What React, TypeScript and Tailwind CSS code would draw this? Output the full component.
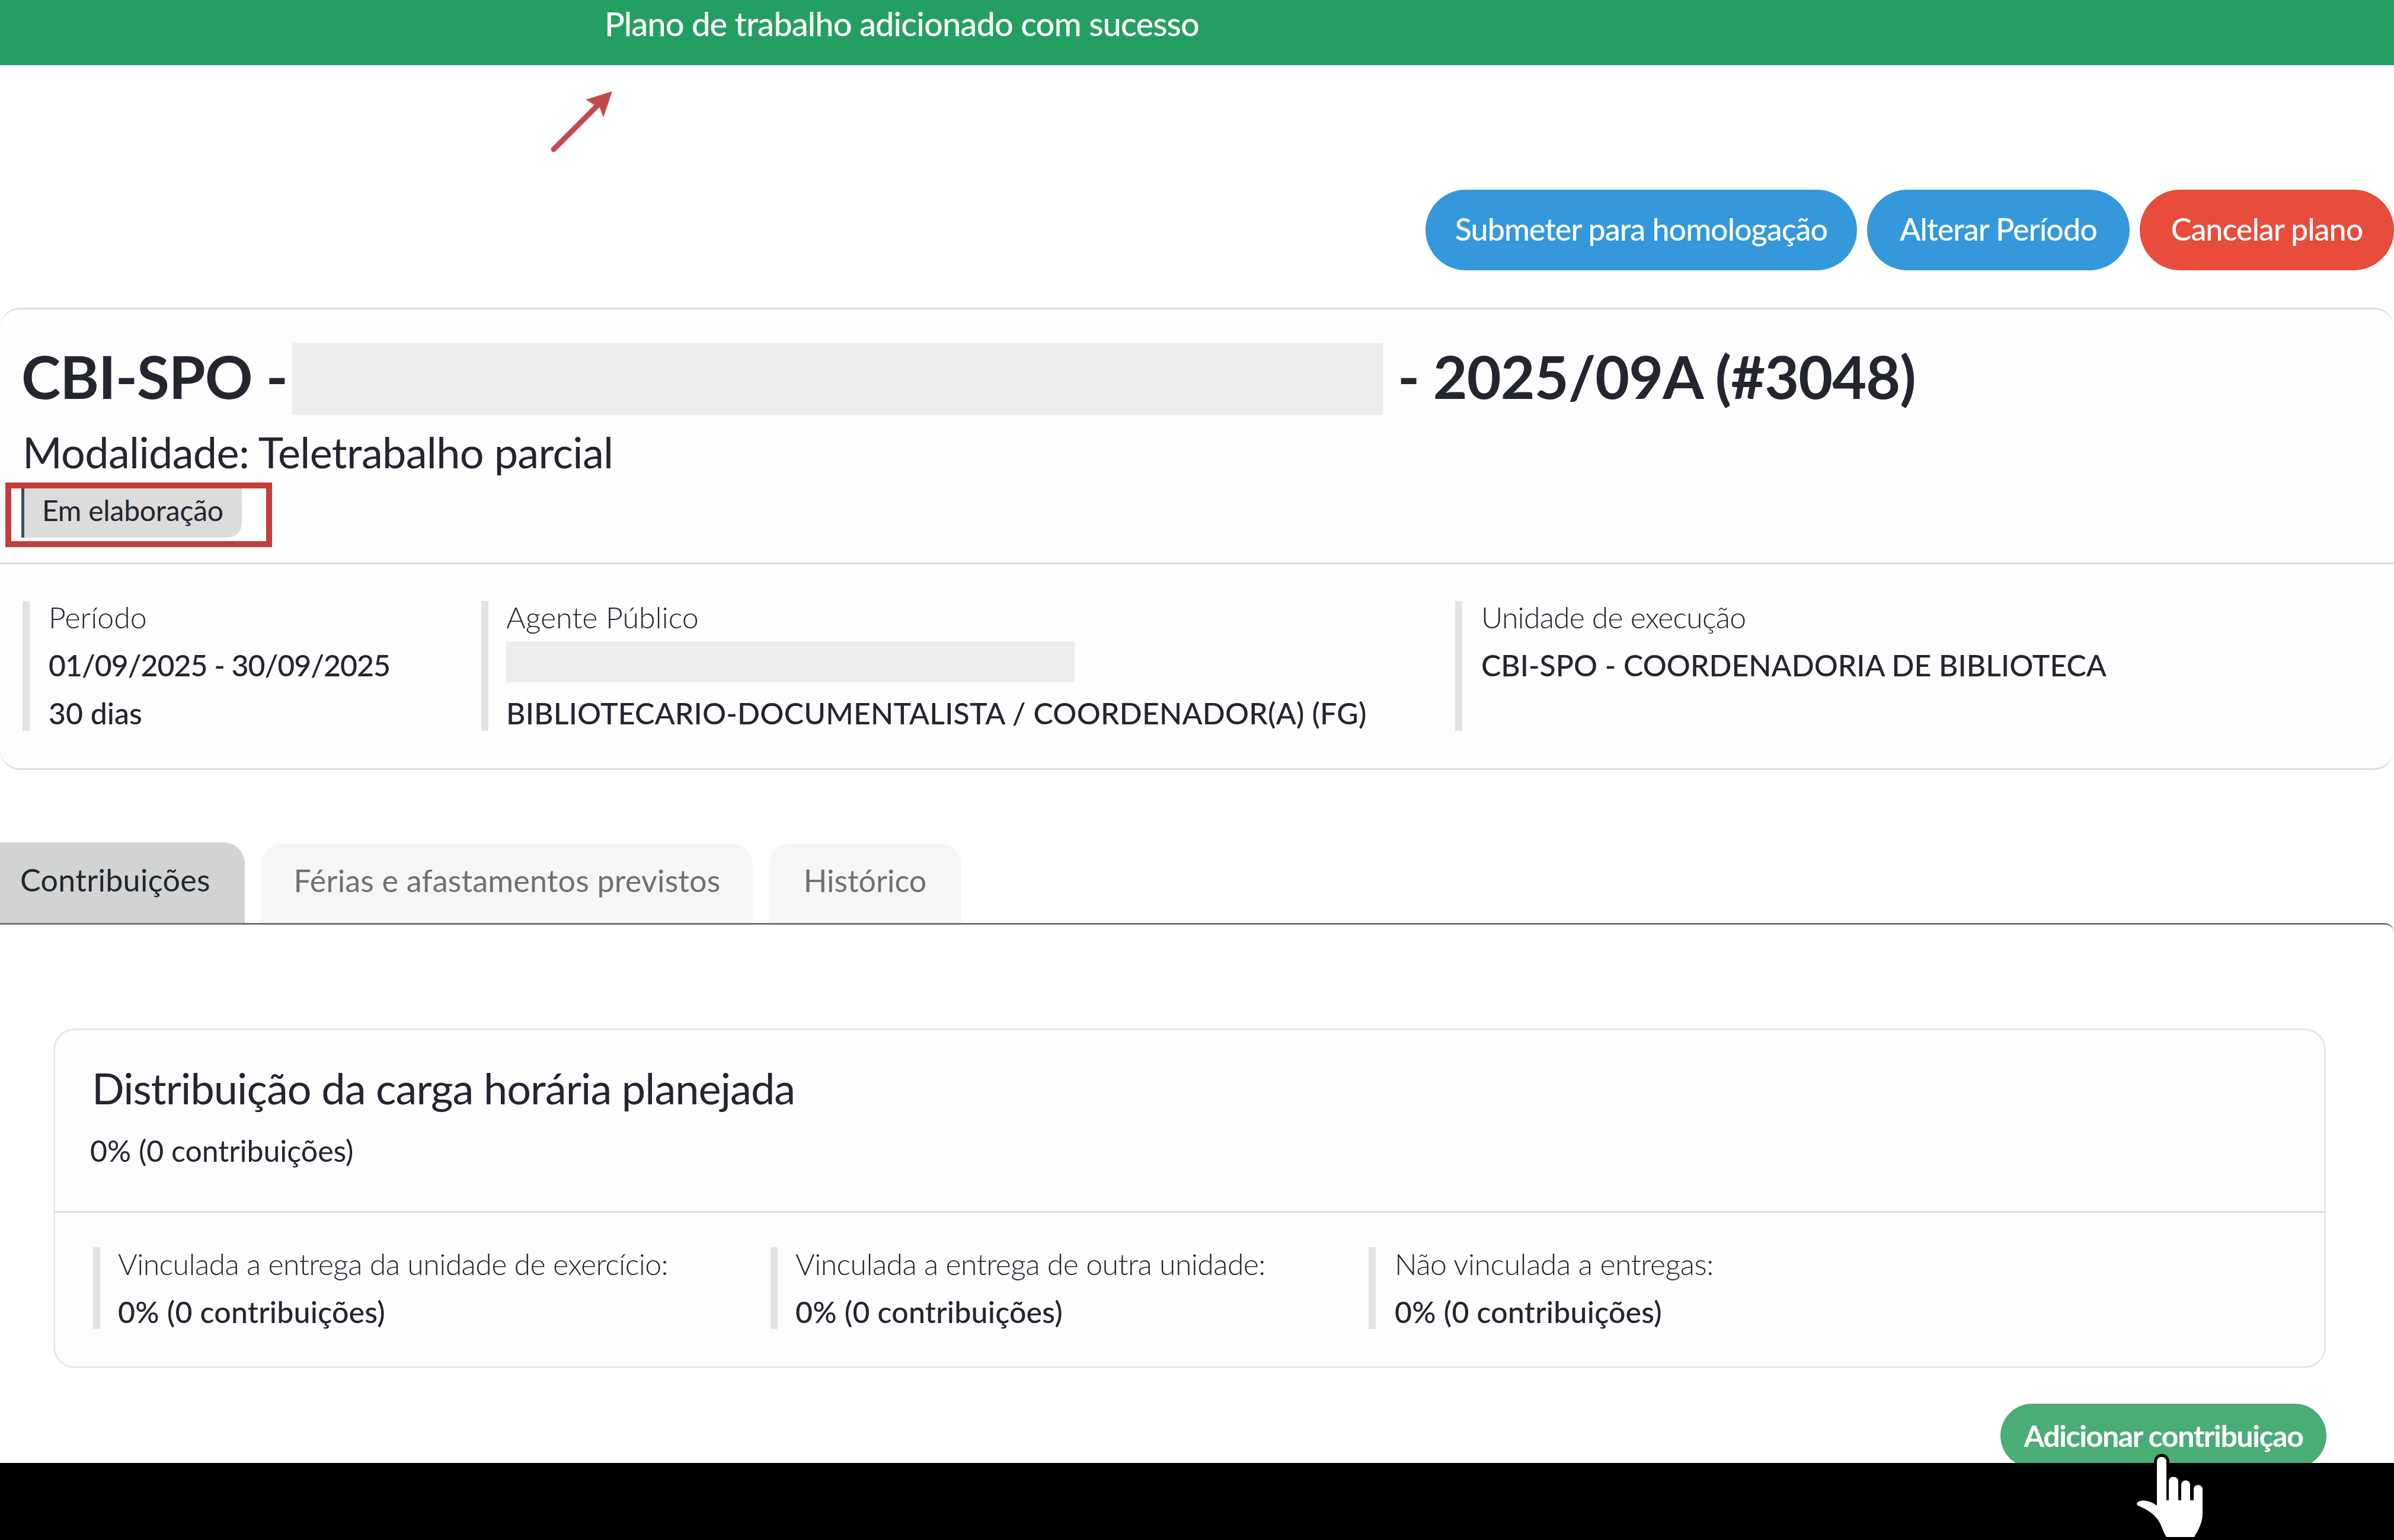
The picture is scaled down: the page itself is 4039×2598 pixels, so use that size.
import React from "react";

const Redacted = ({ className }: { className: string }) => (
  <div className={`bg-[#ecedee] ${className}`} />
);

const InfoBlock = ({
  className,
  children,
}: {
  className: string;
  children: React.ReactNode;
}) => (
  <div className={`border-l-[12px] border-[#e2e3e3] ${className}`}>
    {children}
  </div>
);

const HandCursor = () => (
  <svg
    className="absolute left-[3600px] top-[2450px]"
    width="130"
    height="148"
    viewBox="0 0 130 148"
  >
    <path
      d="M39 16 C39 5 55 5 55 16 L55 81 L59 81 L59 49 C59 39 75 39 75 49 L75 81 L80 81 L80 55 C80 45 95 45 95 55 L95 81 L101 81 L101 62 C101 53 116 53 116 62 L116 103 C116 120 108 132 102 143 L55 143 C49 134 47 122 40 113 C34 104 20 95 7 90 C3 87 6 83 12 82 C22 80 32 85 39 90 Z"
      fill="#fff"
      stroke="#000"
      strokeWidth="10"
      strokeLinejoin="round"
      paintOrder="stroke"
    />
  </svg>
);

export default function App() {
  return (
    <div className="relative h-[2598px] w-full overflow-hidden bg-white font-['Lato',sans-serif] text-[50px] leading-[81px] text-[#23252f]">
      {/* Banner */}
      <div className="flex h-[110px] items-start bg-[#249f62] pl-[1020px] text-[56px] font-medium leading-[80px] tracking-[-0.9px] text-white">
        Plano de trabalho adicionado com sucesso
      </div>

      <svg
        className="absolute left-[925px] top-[145px]"
        width="115"
        height="118"
        viewBox="0 0 115 118"
      >
        <path d="M9 107 L82 34" stroke="#c4494e" strokeWidth="9" strokeLinecap="round" />
        <path d="M108 9 L63 23 L78 32 L87 37 L93 53 Z" fill="#c4494e" />
      </svg>

      {/* Actions */}
      <div className="mt-[210px] flex h-[136px] justify-end gap-[17px] text-[52px] font-medium tracking-[-1px] text-white">
        <button className="flex h-full w-[728px] items-center justify-center rounded-[68px] bg-[#3498db] pb-[4px]">
          Submeter para homologação
        </button>
        <button className="flex h-full w-[443px] items-center justify-center rounded-[68px] bg-[#3498db] pb-[4px]">
          Alterar Período
        </button>
        <button className="flex h-full w-[429px] items-center justify-center rounded-[68px] bg-[#e74c3c] pb-[4px]">
          Cancelar plano
        </button>
      </div>

      {/* Plan card */}
      <div className="mt-[63px] h-[780px] rounded-[34px] border-y-[3px] border-[#dcdddf] bg-[#fdfdfd]">
        <div className="flex h-[430px] flex-col border-b-[3px] border-[#d8d9da]">
          <div className="flex items-center pl-[36px] pt-[52px] text-[100px] font-bold leading-[121px] tracking-[-1px]">
            <span>CBI-SPO -</span>
            <Redacted className="ml-[8px] h-[121px] w-[1840px] translate-y-[5px]" />
            <span className="ml-[25px]">- 2025/09A (#3048)</span>
          </div>
          <div className="pl-[38px] pt-[22px] text-[72px] leading-[90px] tracking-[-0.65px]">
            Modalidade: Teletrabalho parcial
          </div>
          <div className="ml-[9px] mt-[7px] h-[109px] w-[450px] border-[10px] border-[#c43c3c] bg-white pl-[17px]">
            <div className="h-[83px] w-[372px] rounded-br-[24px] border-l-[5px] border-[#37505f] bg-[#dcdcdc] pl-[30px] text-[48px] leading-[74px] tracking-[-0.2px]">
              Em elaboração
            </div>
          </div>
        </div>
        <div className="flex pl-[38px] pt-[62px]">
          <InfoBlock className="h-[219px] w-[774px] pl-[32px]">
            <div className="-mt-[13px] font-light">Período</div>
            <div className="font-medium tracking-[-1px]">
              01/09/2025 - 30/09/2025
            </div>
            <div className="font-medium">30 dias</div>
          </InfoBlock>
          <InfoBlock className="h-[219px] w-[1643px] pl-[30px]">
            <div className="-mt-[13px] font-light">Agente Público</div>
            <Redacted className="h-[69px] w-[959px]" />
            <div className="mt-[12px] font-medium tracking-[0.2px]">
              BIBLIOTECARIO-DOCUMENTALISTA / COORDENADOR(A) (FG)
            </div>
          </InfoBlock>
          <InfoBlock className="h-[219px] pl-[32px]">
            <div className="-mt-[13px] font-light tracking-[-0.8px]">
              Unidade de execução
            </div>
            <div className="font-medium">
              CBI-SPO - COORDENADORIA DE BIBLIOTECA
            </div>
          </InfoBlock>
        </div>
      </div>

      {/* Tabs */}
      <div className="mt-[122px] flex h-[136px] items-end text-[52px] text-[#6e7076]">
        <div className="flex h-[136px] w-[413px] items-center rounded-tr-[36px] bg-[#d2d3d3] pb-[10px] pl-[34px] tracking-[0.3px] text-[#23252f]">
          Contribuições
        </div>
        <div className="ml-[28px] flex h-[134px] w-[829px] items-center justify-center rounded-t-[36px] bg-[#f5f6f6] pb-[10px] tracking-[0.2px]">
          Férias e afastamentos previstos
        </div>
        <div className="ml-[27px] flex h-[134px] w-[325px] items-center justify-center rounded-t-[36px] bg-[#f5f6f6] pb-[10px]">
          Histórico
        </div>
      </div>

      {/* Tab content */}
      <div className="h-[908px] rounded-tr-[16px] border-t-[3px] border-[#74747e] pl-[90px] pt-[175px]">
        <div className="h-[573px] w-[3834px] rounded-[36px] border-[3px] border-[#e6e7e9] bg-[#fdfdfd]">
          <div className="h-[308px] border-b-[3px] border-[#dcdce2] pl-[62px] pt-[52px]">
            <div className="text-[72px] leading-[90px] tracking-[-0.9px]">
              Distribuição da carga horária planejada
            </div>
            <div className="-ml-[3px] mt-[21px]">0% (0 contribuições)</div>
          </div>
          <div className="flex pl-[64px] pt-[58px]">
            <InfoBlock className="h-[138px] w-[1143px] pl-[30px]">
              <div className="-mt-[12px] font-light tracking-[-0.6px]">
                Vinculada a entrega da unidade de exercício:
              </div>
              <div className="font-medium tracking-[0.25px]">0% (0 contribuições)</div>
            </InfoBlock>
            <InfoBlock className="h-[138px] w-[1009px] pl-[30px]">
              <div className="-mt-[12px] font-light tracking-[-0.6px]">
                Vinculada a entrega de outra unidade:
              </div>
              <div className="font-medium tracking-[0.25px]">0% (0 contribuições)</div>
            </InfoBlock>
            <InfoBlock className="h-[138px] pl-[32px]">
              <div className="-mt-[12px] font-light tracking-[-0.5px]">
                Não vinculada a entregas:
              </div>
              <div className="font-medium tracking-[0.25px]">0% (0 contribuições)</div>
            </InfoBlock>
          </div>
        </div>
        <div className="mt-[60px] flex justify-end pr-[114px]">
          <button className="flex h-[108px] w-[550px] items-center justify-center rounded-[54px] bg-[#4aad76] text-[50px] font-bold tracking-[-1.4px] text-white">
            Adicionar contribuiçao
          </button>
        </div>
      </div>

      {/* Black strip at the bottom of the capture */}
      <div className="absolute inset-x-0 top-[2468px] h-[130px] bg-black" />
      <HandCursor />
    </div>
  );
}
